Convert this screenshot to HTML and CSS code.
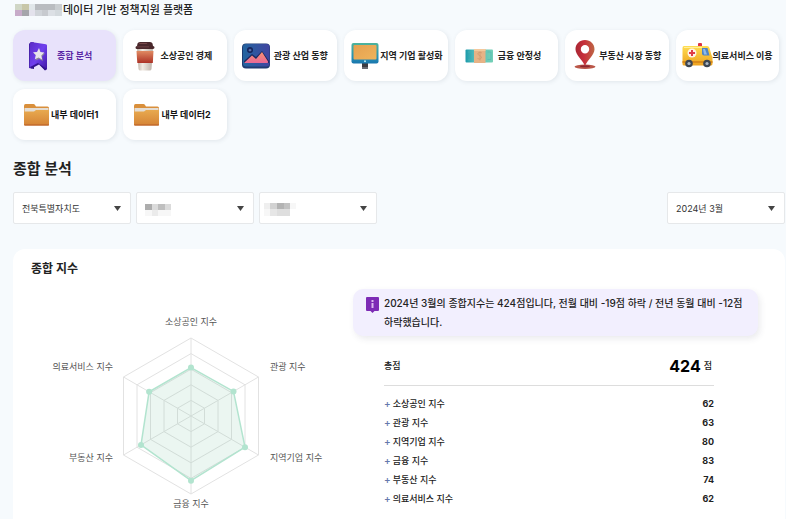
FILE: index.html
```html
<!DOCTYPE html>
<html lang="ko">
<head>
<meta charset="utf-8">
<meta name="viewport" content="width=device-width, initial-scale=1">
<title>데이터 기반 정책지원 플랫폼</title>
<link rel="stylesheet" href="styles.css">
</head>
<body>
<header class="site-header">
  <svg class="site-mark" width="48" height="14" viewBox="0 0 48 14" aria-hidden="true">
    <path fill="#d0d6c6" d="M0 1h7v6H0z"/><path fill="#c8c7a9" d="M7 1h7v6H7z"/><path fill="#e1e7ea" d="M14 1h6v6h-6z"/><path fill="#b9bcc0" d="M20 1h20v6H20z"/><path fill="#c9cdd0" d="M40 1h7v6h-7z"/>
    <path fill="#c7abc9" d="M0 7h7v6H0z"/><path fill="#a5a5ab" d="M7 7h7v6H7z"/><path fill="#e3e2ec" d="M14 7h6v6h-6z"/><path fill="#d0d4d9" d="M20 7h7v6h-7z"/><path fill="#c7cacf" d="M27 7h6v6h-6z"/><path fill="#dce0e5" d="M33 7h7v6h-7z"/><path fill="#d4dade" d="M40 7h7v6h-7z"/>
  </svg>
  <span>데이터 기반 정책지원 플랫폼</span>
</header>

<nav class="menu" aria-label="분석 메뉴">
  <a class="card card-active" href="#" aria-current="page">
    <svg width="38" height="36" viewBox="0 0 38 36" aria-hidden="true">
      <defs><linearGradient id="ribbon" x1="0" y1="0" x2="1" y2="1"><stop offset="0" stop-color="#5a2bc4"/><stop offset=".5" stop-color="#7040ee"/><stop offset="1" stop-color="#3d16a0"/></linearGradient></defs>
      <path fill="#2e1285" d="M10 6l2-2 3 .4V31l-5-1z"/>
      <path fill="url(#ribbon)" d="M12 4l15 2.300q1 .2 1 1.300v23.500l-2 1.200-6-6.500-6 2.700-3.500 1.500V6z"/>
      <path fill="#341490" d="M11 29l8-4 9 6-2 1.500-6-6-7.500 4z"/>
      <path fill="#8a8698" d="M20.500 11l1.500 4 4 .5-3 3 1 4.500-4-2-3.500 1.500 1-4.500-3-3 4-.3z"/>
      <path fill="#e8e4ed" d="M20 10l1.300 4 4 .5-3 3 .8 4-3.600-1.900-3.700 1.600 1-4.200-2.800-2.700 4-.4z"/>
    </svg>
    <span>종합 분석</span>
  </a>
  <a class="card" href="#">
    <svg width="31" height="36" viewBox="0 0 31 36" aria-hidden="true">
      <defs><linearGradient id="sleeve" x1="0" y1="0" x2="0" y2="1"><stop offset="0" stop-color="#e08a62"/><stop offset="1" stop-color="#ad3226"/></linearGradient>
      <linearGradient id="paper"><stop offset="0" stop-color="#bdb1a6"/><stop offset=".35" stop-color="#f1eae2"/><stop offset="1" stop-color="#b9aea5"/></linearGradient></defs>
      <path fill="url(#paper)" d="M8 10h16l-1.500 21q-.1 1.500-2 1.500h-9q-1.800 0-2-1.500z"/>
      <path fill="url(#sleeve)" d="M7.500 13h17l-.7 12H8.300z"/>
      <path fill="#49272b" d="M8.500 5.500Q9 4 11 4h10q2 0 2.500 1.500l.5 2.500q1.500.2 1.500 1.500T24 11H8q-1.500 0-1.500-1.500T8 8z"/>
      <path fill="#78494a" d="M10.500 5h8l-1 1h-7.500zM8 8.500h12v.7H8z"/>
    </svg>
    <span>소상공인 경제</span>
  </a>
  <a class="card" href="#">
    <svg width="34" height="36" viewBox="0 0 34 36" aria-hidden="true">
      <defs><linearGradient id="sky" x1="0" y1="0" x2="1" y2="0"><stop offset="0" stop-color="#23649f"/><stop offset="1" stop-color="#4145a0"/></linearGradient>
      <linearGradient id="peak" x1="0" y1="0" x2="0" y2="1"><stop offset="0" stop-color="#f9926e"/><stop offset="1" stop-color="#e86898"/></linearGradient></defs>
      <rect x="2" y="5.500" width="28" height="25" rx="4" fill="#203b72"/>
      <rect x="3" y="6" width="26.500" height="22.500" rx="3" fill="url(#sky)"/>
      <path fill="#1c285f" d="M4 23l8-7 4 3 6-6 7 10v2H4z"/>
      <path fill="url(#peak)" d="M4 25l8-7.500 4 3.500 6-7 6 9.500q.5 1.500-.8 1.500z"/>
      <circle cx="10" cy="12" r="3" fill="#15245a"/><path fill="#6f88c7" d="M10 10.500l.5 1 1.500.5-1.500.7-.5 1.300-.5-1.300L8 12l1.500-.5z"/>
    </svg>
    <span>관광 산업 동향</span>
  </a>
  <a class="card" href="#">
    <svg width="30" height="36" viewBox="0 0 30 36" aria-hidden="true">
      <defs><linearGradient id="bezel" x1="0" y1="0" x2="0" y2="1"><stop offset="0" stop-color="#4eb39b"/><stop offset=".7" stop-color="#268fb5"/><stop offset="1" stop-color="#1976ad"/></linearGradient>
      <linearGradient id="screen" x1="0" y1="0" x2="1" y2="1"><stop offset="0" stop-color="#e5a04f"/><stop offset="1" stop-color="#efb45c"/></linearGradient></defs>
      <path fill="#3b3c43" d="M12 24h6v7h-6z"/><path fill="#686a71" d="M12 29h6v2h-6z"/>
      <rect x="1.500" y="5" width="27" height="20.500" rx="2" fill="url(#bezel)"/>
      <rect x="3.500" y="7" width="23" height="14.500" rx="1" fill="url(#screen)"/>
      <circle cx="15" cy="23.300" r="1" fill="#b9eef4"/>
    </svg>
    <span>지역 기업 활성화</span>
  </a>
  <a class="card" href="#">
    <svg width="37" height="36" viewBox="0 0 37 36" aria-hidden="true">
      <defs><linearGradient id="bill"><stop offset="0" stop-color="#1c9bab"/><stop offset=".3" stop-color="#50b9ba"/><stop offset="1" stop-color="#74d0b6"/></linearGradient></defs>
      <rect x="4.500" y="11.500" width="27.500" height="13" rx="1" fill="url(#bill)"/>
      <path fill="#e7b386" d="M13 11h11.500v14H13z"/><path fill="#f3c89c" d="M13 11h11.500v2H13z"/>
      <path fill="none" stroke="#d29a70" stroke-width=".8" d="M21 15q-2-1.500-4 0-1 1.500 1.500 2.500t2 2.500q-1.500 2-4 .5M19 13.500v9"/>
      <path fill="none" stroke="#4fb6b3" stroke-width=".6" d="M26.500 14h3.500v7.500h-3.500M7 14h3.500M7 22h3.500"/>
    </svg>
    <span>금융 안정성</span>
  </a>
  <a class="card" href="#">
    <svg width="28" height="36" viewBox="0 0 28 36" aria-hidden="true">
      <defs><linearGradient id="pin"><stop offset="0" stop-color="#a82733"/><stop offset=".45" stop-color="#c82f3b"/><stop offset="1" stop-color="#bd6845"/></linearGradient></defs>
      <ellipse cx="14" cy="28.800" rx="10.500" ry="2.200" fill="#ba5648"/><ellipse cx="14" cy="28.300" rx="5" ry="1" fill="#8d2730"/>
      <path fill="url(#pin)" fill-rule="evenodd" d="M14 2c5.500 0 9.500 4 9.500 9.200C23.500 17 17 21 14 28 11 21 4.500 17 4.500 11.200 4.500 6 8.500 2 14 2zm0 5a4.200 4.200 0 1 0 0 8.400A4.200 4.200 0 0 0 14 7z"/>
    </svg>
    <span>부동산 시장 동향</span>
  </a>
  <a class="card" href="#">
    <svg width="31" height="36" viewBox="0 0 31 36" aria-hidden="true">
      <defs><linearGradient id="van" x1="0" y1="0" x2="0" y2="1"><stop offset="0" stop-color="#ffdd51"/><stop offset="1" stop-color="#eda11e"/></linearGradient></defs>
      <rect x="16" y="5" width="4" height="4" rx="1" fill="#dc3545"/>
      <path fill="url(#van)" d="M2 8h23q2 0 2.500 2l2 7q1 1 1 2.500V26q0 1.500-2 1.500H2Q.5 27.500.5 26V10Q.5 8 2 8z"/>
      <path fill="#d98a19" d="M.5 23h30v2H.5z"/><path fill="#ffef9a" d="M2 9h18v1H2z"/>
      <path fill="#4f83c5" d="M20 10h5.500l2 7.500H22q-2 0-2-2z"/><path fill="#8fbbea" d="M21 11h2l2 5.500h-3z"/>
      <circle cx="10" cy="15" r="4.500" fill="#fff3e8"/><path fill="#df3d49" d="M9 12h2v2h2v2h-2v2H9v-2H7v-2h2z"/>
      <circle cx="7" cy="25.500" r="3.800" fill="#3d4652"/><circle cx="7" cy="25.500" r="1.600" fill="#adb8c5"/>
      <circle cx="25" cy="25.500" r="3.800" fill="#3d4652"/><circle cx="25" cy="25.500" r="1.600" fill="#adb8c5"/>
    </svg>
    <span>의료서비스 이용</span>
  </a>
  <a class="card card-internal" href="#">
    <svg width="32" height="36" viewBox="0 0 32 36" aria-hidden="true">
      <defs><linearGradient id="folder" x1="0" y1="0" x2="0" y2="1"><stop offset="0" stop-color="#e8aa50"/><stop offset="1" stop-color="#d58335"/></linearGradient></defs>
      <path fill="#d98f3b" d="M5 9q0-2 1.500-2h8q1 0 1.500 1l1 1.500h11.500q1.500 0 1.500 1.500v8H5z"/>
      <path fill="#e4ddd4" d="M5.500 11h24v5h-24z"/>
      <path fill="url(#folder)" d="M5 14.500h10l2-1.500h13v14.500q0 1-1 1H6q-1 0-1-1z"/><path fill="#b75d27" d="M5 27.500h25v.5q0 .5-1 .5H6q-1 0-1-1z"/>
    </svg>
    <span>내부 데이터1</span>
  </a>
  <a class="card card-internal" href="#">
    <svg width="32" height="36" viewBox="0 0 32 36" aria-hidden="true">
      <path fill="#d98f3b" d="M5 9q0-2 1.500-2h8q1 0 1.500 1l1 1.500h11.500q1.500 0 1.500 1.500v8H5z"/>
      <path fill="#e4ddd4" d="M5.500 11h24v5h-24z"/>
      <path fill="url(#folder)" d="M5 14.500h10l2-1.500h13v14.500q0 1-1 1H6q-1 0-1-1z"/><path fill="#b75d27" d="M5 27.500h25v.5q0 .5-1 .5H6q-1 0-1-1z"/>
    </svg>
    <span>내부 데이터2</span>
  </a>
</nav>

<main class="content">
  <h1 class="page-title">종합 분석</h1>
  <form class="filters">
    <div class="field">
      <select aria-label="시도"><option>전북특별자치도</option></select>
      <svg class="arrow" width="7" height="5" viewBox="0 0 7 5" aria-hidden="true"><path d="M0 0h7L3.500 5z"/></svg>
    </div>
    <div class="field">
      <select aria-label="시군구"><option></option></select>
      <svg class="mosaic" width="34" height="18" viewBox="0 0 34 18" aria-hidden="true"><path fill="#adadad" d="M1 4h7v6H1z"/><path fill="#dbdbdb" d="M8 4h6v6H8zM21 4h6v6h-6z"/><path fill="#bfbfbf" d="M14 4h7v6h-7z"/><path fill="#f7f7f7" d="M1 10h7v6H1zM14 10h13v6H14z"/><path fill="#ebebeb" d="M8 10h6v6H8z"/></svg>
      <svg class="arrow" width="7" height="5" viewBox="0 0 7 5" aria-hidden="true"><path d="M0 0h7L3.500 5z"/></svg>
    </div>
    <div class="field">
      <select aria-label="읍면동"><option></option></select>
      <svg class="mosaic mosaic-wide" width="34" height="18" viewBox="0 0 34 18" aria-hidden="true"><path fill="#efefef" d="M0 3h6v6H0z"/><path fill="#d2d2d2" d="M6 3h7v6H6z"/><path fill="#b3b3b3" d="M13 3h7v6h-7z"/><path fill="#c2c2c2" d="M20 3h6v6h-6z"/><path fill="#f7f7f7" d="M26 3h6v6h-6zM0 9h6v7H0z"/><path fill="#e6e6e6" d="M6 9h7v7H6z"/><path fill="#dedede" d="M13 9h13v7H13z"/></svg>
      <svg class="arrow" width="7" height="5" viewBox="0 0 7 5" aria-hidden="true"><path d="M0 0h7L3.500 5z"/></svg>
    </div>
    <div class="field field-month">
      <select aria-label="기준 월"><option>2024년 3월</option></select>
      <svg class="arrow" width="7" height="5" viewBox="0 0 7 5" aria-hidden="true"><path d="M0 0h7L3.500 5z"/></svg>
    </div>
  </form>

  <section class="panel">
    <h2 class="panel-title">종합 지수</h2>
    <div class="panel-body">
      <svg class="radar" viewBox="0 0 322 230" role="img" aria-label="종합 지수 방사형 차트">
        <g class="radar-grid">
          <path d="M160 49l67.500 39v78L160 205l-67.500-39V88z"/>
          <path d="M160 64.600l54 31.200v62.400l-54 31.200-54-31.200V95.800z"/>
          <path d="M160 80.200l40.500 23.400v46.800L160 173.800l-40.500-23.400v-46.800z"/>
          <path d="M160 95.800l27 15.600v31.200l-27 15.600-27-15.600v-31.200z"/>
          <path d="M160 111.400l13.500 7.800v15.600l-13.500 7.800-13.500-7.800v-15.600z"/>
          <path d="M160 49v156M92.500 88l135 78M227.500 88l-135 78"/>
        </g>
        <path class="radar-area" d="M160 78.600L202.500 102.400 214 158.200 160 191.700 110 155.900 118.100 102.800z"/>
        <g class="radar-dots"><circle cx="160" cy="78.600" r="3"/><circle cx="202.500" cy="102.400" r="3"/><circle cx="214" cy="158.200" r="3"/><circle cx="160" cy="191.700" r="3"/><circle cx="110" cy="155.900" r="3"/><circle cx="118.100" cy="102.800" r="3"/></g>
        <g class="radar-labels">
          <text x="160" y="36" text-anchor="middle">소상공인 지수</text>
          <text x="239" y="81">관광 지수</text>
          <text x="239" y="172">지역기업 지수</text>
          <text x="160" y="218" text-anchor="middle">금융 지수</text>
          <text x="82" y="172" text-anchor="end">부동산 지수</text>
          <text x="82" y="81" text-anchor="end">의료서비스 지수</text>
        </g>
      </svg>
      <div class="summary">
        <div class="notice">
          <svg width="13" height="16" viewBox="0 0 13 16" aria-hidden="true"><path fill="#7d2bb5" d="M1 0h11q1 0 1 1v12q0 1-1 1H8.500l-2 2-2-2H1q-1 0-1-1V1q0-1 1-1z"/><path fill="#dcb8ee" d="M5.500 3h2v2h-2zM5.500 6h2v5h-2z"/></svg>
          <p>2024년 3월의 종합지수는 424점입니다, 전월 대비 -19점 하락 / 전년 동월 대비 -12점 하락했습니다.</p>
        </div>
        <div class="scores">
          <div class="total"><span>총점</span><span class="total-value"><strong>424</strong>점</span></div>
          <table class="score-table">
            <tbody>
              <tr><th scope="row">소상공인 지수</th><td>62</td></tr>
              <tr><th scope="row">관광 지수</th><td>63</td></tr>
              <tr><th scope="row">지역기업 지수</th><td>80</td></tr>
              <tr><th scope="row">금융 지수</th><td>83</td></tr>
              <tr><th scope="row">부동산 지수</th><td>74</td></tr>
              <tr><th scope="row">의료서비스 지수</th><td>62</td></tr>
            </tbody>
          </table>
        </div>
      </div>
    </div>
  </section>
</main>
</body>
</html>
```

FILE: styles.css
```css
* {
  box-sizing: border-box;
}

body {
  display: flex;
  flex-direction: column;
  min-height: 100vh;
  margin: 0;
  padding: 2px 1px 0 13px;
  background: #f6fafd;
  color: #222;
  font-family: Inter, "Noto Sans CJK KR", sans-serif;
  font-size: 9px;
  word-break: keep-all;
}

h1,
h2,
p {
  margin: 0;
}

.site-header {
  display: flex;
  align-items: center;
  height: 16px;
  margin-bottom: 12px;
  padding-left: 2px;
  font-size: 11px;
  font-weight: 500;
  line-height: 16px;
}

.menu {
  display: grid;
  grid-template-columns: repeat(7, 1fr);
  gap: 8px 7px;
  margin-right: 6px;
}

.card {
  display: flex;
  align-items: center;
  height: 51px;
  padding-left: 6px;
  border-radius: 12px;
  background: #fff;
  box-shadow: 1px 1px 4px rgba(70, 90, 110, 0.12);
  color: #222;
  font-weight: 700;
  line-height: 14px;
  text-decoration: none;
  white-space: nowrap;
}

.card svg {
  flex: none;
}

.card-active {
  background: #e8e2fb;
  color: #5a27a5;
}

.card-internal {
  color: #111;
}

.content {
  display: flex;
  flex: 1;
  flex-direction: column;
}

.page-title {
  margin: 19px 0 13px;
  font-size: 15px;
  font-weight: 700;
  line-height: 20px;
}

.filters {
  display: flex;
  gap: 5px;
  margin-bottom: 25px;
}

.field {
  position: relative;
  width: 118px;
}

.field-month {
  margin-left: auto;
}

.field select {
  display: block;
  width: 100%;
  height: 32px;
  padding: 0 20px 0 8px;
  appearance: none;
  border: 1px solid #e6e8ea;
  border-radius: 2px;
  background: #fff;
  color: #333;
  font: inherit;
}

.arrow,
.mosaic {
  position: absolute;
  pointer-events: none;
}

.arrow {
  top: 14px;
  right: 10px;
  fill: #444;
}

.mosaic {
  top: 8px;
  left: 8px;
}

.mosaic-wide {
  left: 5px;
}

.panel {
  flex: 1;
  padding: 11px 27px 0 18px;
  border-radius: 12px 12px 0 0;
  background: #fff;
}

.panel-title {
  margin-bottom: 11px;
  font-size: 12px;
  font-weight: 700;
  line-height: 18px;
}

.panel-body {
  display: grid;
  grid-template-columns: 322fr 405fr;
  align-items: start;
}

.radar {
  display: block;
  width: 100%;
}

.radar-grid {
  fill: none;
  stroke: #e2e2e2;
}

.radar-area {
  fill: rgba(110, 190, 155, 0.14);
  stroke: #b2e4cf;
  stroke-width: 1.5;
}

.radar-dots {
  fill: #b2e4cf;
}

.radar-labels {
  fill: #555;
  font-size: 9px;
}

.notice {
  display: flex;
  gap: 5px;
  padding: 5px 10px 4px 13px;
  border-radius: 10px;
  background: #f2effe;
  box-shadow: 2px 3px 6px rgba(60, 60, 90, 0.1);
  font-size: 10px;
  font-weight: 500;
  line-height: 19px;
}

.notice svg {
  flex: none;
  margin-top: 3px;
}

.scores {
  margin: 18px 44px 0 31px;
}

.total {
  display: flex;
  align-items: center;
  justify-content: space-between;
  padding-bottom: 7px;
  border-bottom: 1px solid #ddd;
  font-weight: 500;
  line-height: 24px;
}

.total-value {
  display: flex;
  gap: 3px;
  padding-right: 2px;
}

.total-value strong {
  color: #000;
  font-size: 16px;
}

.score-table {
  width: 100%;
  margin-top: 8px;
  border-collapse: collapse;
  line-height: 19px;
}

.score-table th,
.score-table td {
  height: 19px;
  padding: 0;
}

.score-table th {
  font-weight: 500;
  text-align: left;
}

.score-table th::before {
  margin-right: 2px;
  color: #6478ab;
  font-size: 10px;
  line-height: 1;
  content: "+";
}

.score-table td {
  font-weight: 700;
  text-align: right;
}
```
